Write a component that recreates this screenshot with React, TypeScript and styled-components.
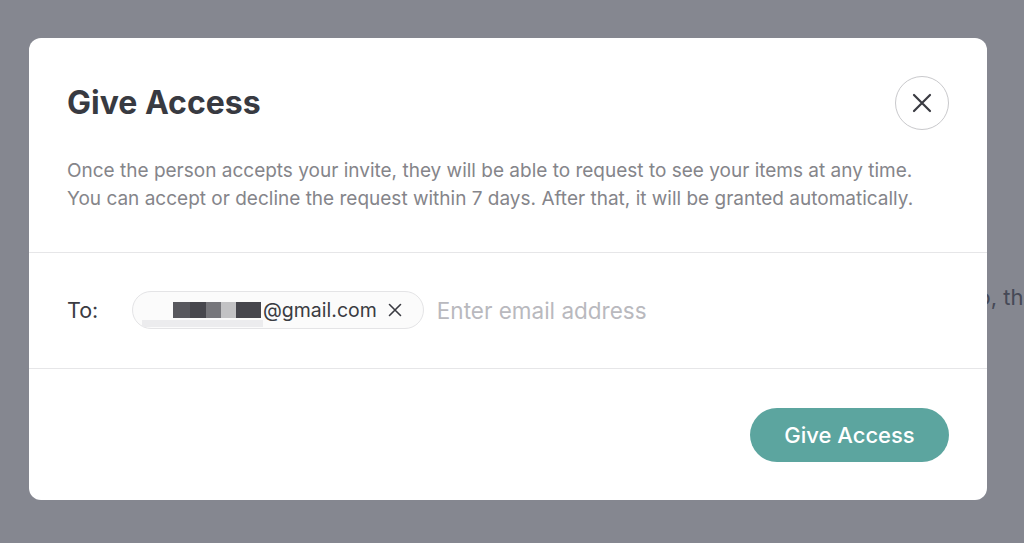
import React from 'react';
import styled, { createGlobalStyle } from 'styled-components';

const GlobalStyle = createGlobalStyle`
    html, body {
        margin: 0;
        padding: 0;
        height: 100%;
        background: #ffffff;
        font-family: Inter, 'Noto Sans', sans-serif;
    }
    * { box-sizing: border-box; }
`;

const Page = styled.div`
    width: 1024px;
    height: 543px;
    overflow: hidden;
    position: relative;
    padding: 284px 0 0 966px;
`;

const PageText = styled.p`
    margin: 0;
    font-size: 22px;
    color: #80828b;
    white-space: nowrap;
`;

const Backdrop = styled.div`
    position: absolute;
    inset: 0;
    background: rgba(12, 15, 33, 0.5);
    display: flex;
    padding: 38px 37px 43px 29px;
`;

const Modal = styled.div`
    flex: 1;
    background: #ffffff;
    border-radius: 12px;
    display: flex;
    flex-direction: column;
`;

const Section = styled.div<{ $pad: string }>`
    padding: ${(p) => p.$pad};
    & + & {
        border-top: 1px solid #e6e6e8;
    }
`;

const HeaderRow = styled.div`
    display: flex;
    align-items: center;
    justify-content: space-between;
`;

const Title = styled.h2`
    margin: 0;
    font-size: 32px;
    line-height: 40px;
    font-weight: 700;
    color: #383a41;
`;

const CloseButton = styled.button`
    width: 54px;
    height: 54px;
    border-radius: 50%;
    border: 1px solid #c9c9cc;
    background: #ffffff;
    display: flex;
    align-items: center;
    justify-content: center;
    padding: 0;
    color: #3a3b42;
    cursor: pointer;
`;

const Description = styled.p`
    margin: 27px 0 0;
    font-size: 19px;
    line-height: 28px;
    color: #85858a;
    white-space: nowrap;
`;

const ToRow = styled.div`
    display: flex;
    align-items: center;
`;

const ToLabel = styled.span`
    font-size: 21.5px;
    color: #3a3b42;
    width: 65px;
`;

const Chip = styled.div`
    height: 38px;
    border: 1px solid #e4e4e6;
    background: #fbfbfb;
    border-radius: 19px;
    display: flex;
    align-items: center;
    padding: 0 20px 0 40px;
    position: relative;
`;

const Redaction = styled.span`
    display: flex;
    height: 16px;
`;

const Pixel = styled.span<{ $w: number; $c: string }>`
    width: ${(p) => p.$w}px;
    background: ${(p) => p.$c};
`;

const RedactionShadow = styled.span`
    position: absolute;
    left: 9px;
    top: 28px;
    width: 121px;
    height: 7px;
    background: #ececee;
`;

const ChipText = styled.span`
    font-size: 19.5px;
    color: #3a3b42;
    margin-left: 2px;
`;

const ChipRemove = styled.span`
    display: flex;
    margin-left: 10px;
    color: #3a3b42;
`;

const EmailInput = styled.input`
    margin-left: 13px;
    padding: 0;
    border: none;
    outline: none;
    font-family: inherit;
    font-size: 22.5px;
    color: #3a3b42;
    flex: 1;
    &::placeholder {
        color: #b9b9be;
    }
`;

const Footer = styled.div`
    display: flex;
    justify-content: flex-end;
`;

const PrimaryButton = styled.button`
    width: 199px;
    height: 54px;
    border-radius: 27px;
    border: none;
    background: #5ca59f;
    color: #ffffff;
    font-family: inherit;
    font-size: 22px;
    font-weight: 500;
    cursor: pointer;
`;

const pixels = [
    { w: 17, c: '#58585e' },
    { w: 16, c: '#46464c' },
    { w: 15, c: '#76767b' },
    { w: 15, c: '#c2c2c4' },
    { w: 25, c: '#46464c' },
];

const App = () => {
    return (
        <>
            <GlobalStyle />
            <Page>
                <PageText>so, they can see them</PageText>
                <Backdrop>
                    <Modal>
                        <Section $pad='38px 38px 39px 38px'>
                            <HeaderRow>
                                <Title>Give Access</Title>
                                <CloseButton aria-label='Close'>
                                    <svg width='24' height='24' viewBox='0 0 24 24' fill='none' stroke='currentColor' strokeWidth='2.2' strokeLinecap='round'>
                                        <path d='M4 4l16 16M20 4L4 20' />
                                    </svg>
                                </CloseButton>
                            </HeaderRow>
                            <Description>
                                Once the person accepts your invite, they will be able to request to see your items at any time.
                                <br />
                                You can accept or decline the request within 7 days. After that, it will be granted automatically.
                            </Description>
                        </Section>
                        <Section $pad='38px 38px 39px'>
                            <ToRow>
                                <ToLabel>To:</ToLabel>
                                <Chip>
                                    <Redaction>
                                        {pixels.map((p, i) => (
                                            <Pixel key={i} $w={p.w} $c={p.c} />
                                        ))}
                                    </Redaction>
                                    <RedactionShadow />
                                    <ChipText>@gmail.com</ChipText>
                                    <ChipRemove>
                                        <svg width='16' height='16' viewBox='0 0 16 16' fill='none' stroke='currentColor' strokeWidth='1.6' strokeLinecap='round'>
                                            <path d='M2.5 2.5l11 11M13.5 2.5l-11 11' />
                                        </svg>
                                    </ChipRemove>
                                </Chip>
                                <EmailInput placeholder='Enter email address' />
                            </ToRow>
                        </Section>
                        <Section $pad='39px 38px 38px'>
                            <Footer>
                                <PrimaryButton>Give Access</PrimaryButton>
                            </Footer>
                        </Section>
                    </Modal>
                </Backdrop>
            </Page>
        </>
    );
};

export default App;
